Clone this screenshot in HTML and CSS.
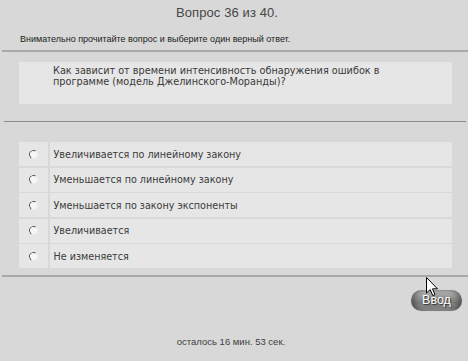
FILE: index.html
```html
<!DOCTYPE html>
<html lang="ru">
<head>
<meta charset="utf-8">
<title>Вопрос 36 из 40</title>
<link rel="stylesheet" href="styles.css">
</head>
<body>
<div class="page">
  <h1 class="title">Вопрос 36 из 40.</h1>
  <p class="instr">Внимательно прочитайте вопрос и выберите один верный ответ.</p>
  <div class="rule rule-top"></div>
  <div class="question">Как зависит от времени интенсивность обнаружения ошибок в программе (модель Джелинского-Моранды)?</div>
  <div class="rule rule-mid"></div>
  <div class="answers">
    <div class="row"><div class="radio-cell"><span class="radio"></span></div><div class="text-cell">Увеличивается по линейному закону</div></div>
    <div class="row"><div class="radio-cell"><span class="radio"></span></div><div class="text-cell">Уменьшается по линейному закону</div></div>
    <div class="row"><div class="radio-cell"><span class="radio"></span></div><div class="text-cell">Уменьшается по закону экспоненты</div></div>
    <div class="row"><div class="radio-cell"><span class="radio"></span></div><div class="text-cell">Увеличивается</div></div>
    <div class="row"><div class="radio-cell"><span class="radio"></span></div><div class="text-cell">Не изменяется</div></div>
  </div>
  <div class="rule rule-bottom"></div>
  <div class="actions"><button class="btn">Ввод</button></div>
  <p class="timer">осталось 16 мин. 53 сек.</p>
  <svg class="cursor" width="13" height="20" viewBox="0 0 13 20"><path d="M0.5 0.5 L0.5 16 L4.2 12.6 L6.8 18.6 L9 17.6 L6.5 11.8 L11.5 11.8 Z" fill="#fff" stroke="#000" stroke-width="1" stroke-linejoin="miter"/></svg>
</div>
</body>
</html>
```
FILE: styles.css
```css
html, body {
  margin: 0;
  padding: 0;
  background: #d8d8d8;
}
.page {
  position: relative;
  width: 468px;
  height: 361px;
  display: flex;
  flex-direction: column;
  font-family: "Liberation Sans", Arial, sans-serif;
}
.title {
  margin: 5px 0 0;
  padding-right: 14px;
  font-size: 13px;
  line-height: 16px;
  font-weight: normal;
  color: #474747;
  text-align: center;
  letter-spacing: 0.1px;
}
.instr {
  margin: 13px 0 0 20px;
  font-size: 9px;
  line-height: 11px;
  color: #222;
}
.rule {
  background: #a9a9a9;
}
.rule-top {
  height: 2px;
  margin: 5px 0 0 2px;
}
.question {
  margin: 10px 16px 0 19px;
  height: 42px;
  box-sizing: border-box;
  padding: 4px 40px 0 34px;
  background: #e6e6e6;
  font-family: "DejaVu Sans", Verdana, sans-serif;
  font-size: 9.7px;
  line-height: 10.5px;
  color: #3a3a3a;
}
.rule-mid {
  height: 1px;
  margin: 17px 2px 0 4px;
  background: #8c8c8c;
}
.answers {
  margin: 20px 16px 0 19px;
  display: flex;
  flex-direction: column;
  gap: 1.5px;
}
.row {
  display: flex;
  height: 24px;
  gap: 1.5px;
}
.radio-cell {
  width: 29px;
  background: #e6e6e6;
  display: flex;
  align-items: center;
  justify-content: center;
}
.radio {
  width: 9px;
  height: 9px;
  border-radius: 50%;
  box-sizing: border-box;
  background: #f6f6f6;
  border: 1.5px solid;
  border-color: #4a4a4a #ececec #ececec #4a4a4a;
  transform: rotate(-15deg);
}
.text-cell {
  flex: 1;
  background: #e6e6e6;
  display: flex;
  align-items: center;
  padding-left: 4px;
  font-family: "DejaVu Sans", Verdana, sans-serif;
  font-size: 9.6px;
  color: #3a3a3a;
}
.rule-bottom {
  height: 2px;
  margin: 7px 0 0 2px;
  background: #a8a8a8;
}
.actions {
  display: flex;
  justify-content: flex-end;
  padding-right: 6px;
  margin-top: 13px;
}
.btn {
  width: 51px;
  height: 21px;
  border: none;
  border-radius: 11px;
  padding: 0;
  background: linear-gradient(to bottom, #c4c4c4 0%, #999 30%, #7a7a7a 60%, #858585 85%, #aaa 100%);
  box-shadow: inset 4px 0 4px rgba(0,0,0,0.3), inset -4px 0 4px rgba(0,0,0,0.3), 0 0 1px #c0c0c0;
  color: #fff;
  font-family: "Liberation Sans", Arial, sans-serif;
  font-size: 12.5px;
  line-height: 21px;
  text-shadow: 1px 1px 1px #333;
}
.timer {
  margin: 25px 0 0;
  padding-right: 6px;
  font-size: 9.5px;
  line-height: 12px;
  color: #404040;
  text-align: center;
}
.cursor {
  position: absolute;
  left: 426px;
  top: 277px;
}
```
